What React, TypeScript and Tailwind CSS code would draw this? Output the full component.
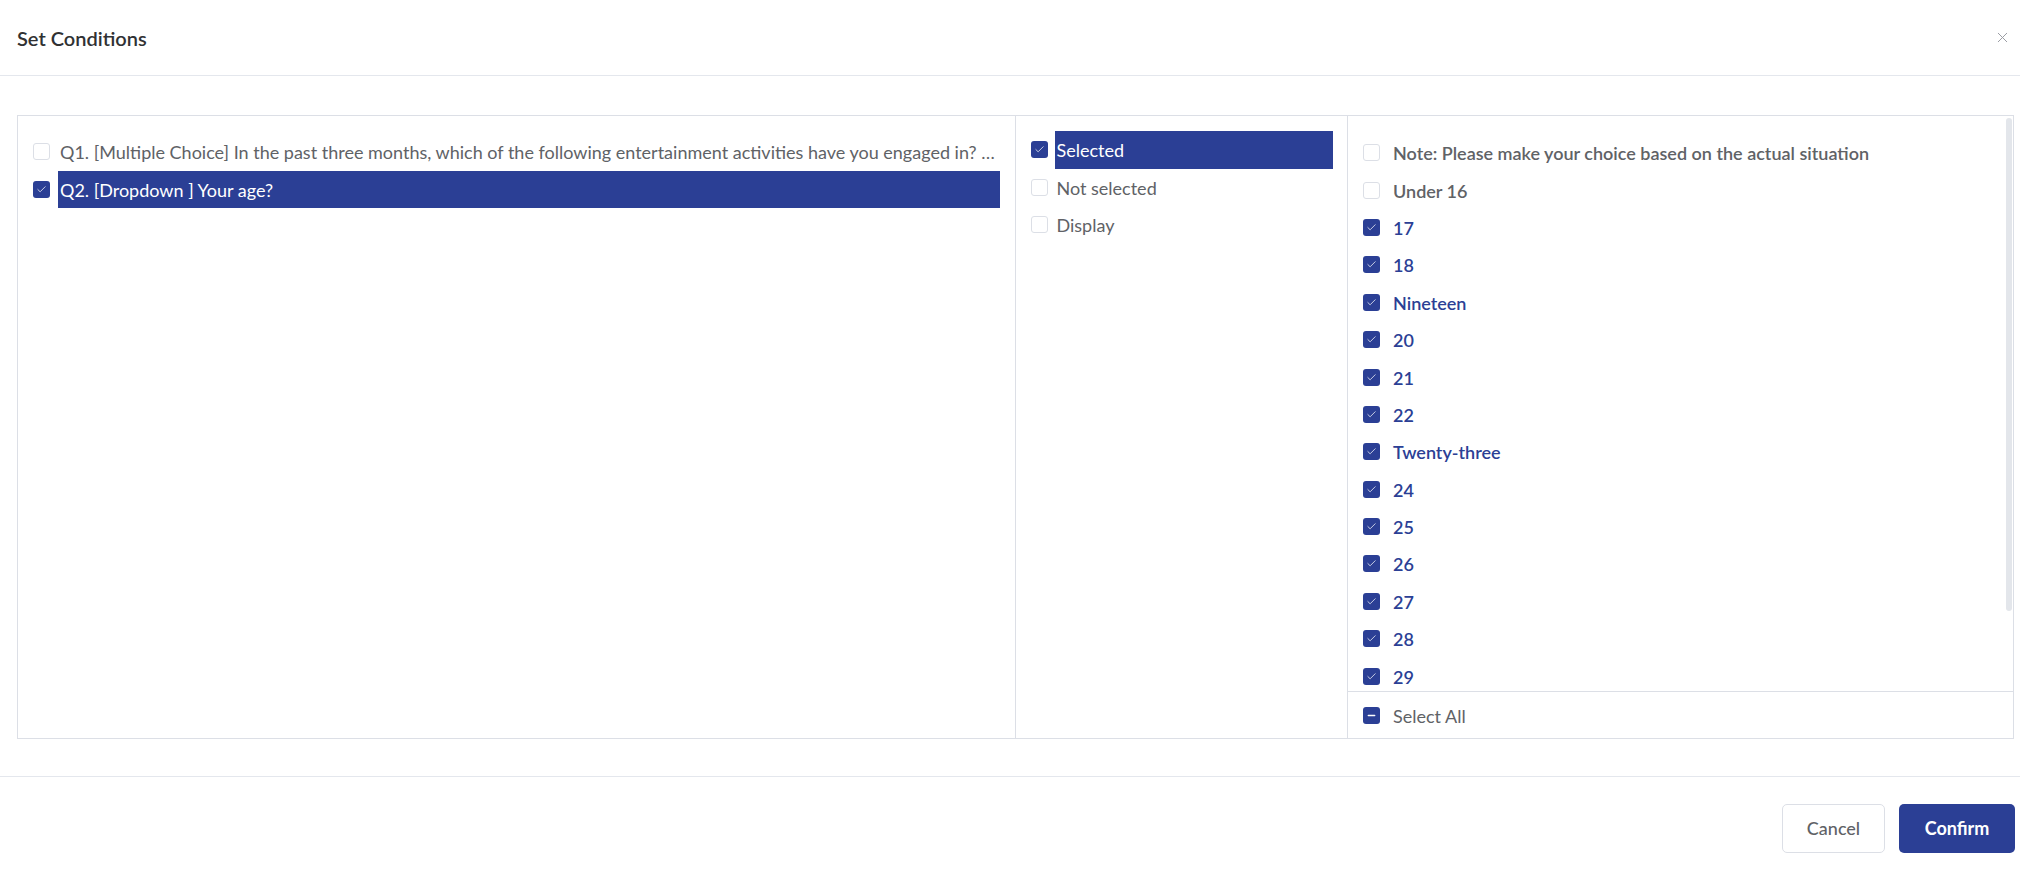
import { X, Check, Minus } from 'lucide-react';

const BLUE = 'bg-[#2b3f95]';

function Box({ checked, partial }: { checked?: boolean; partial?: boolean }) {
  if (checked || partial) {
    return (
      <span className={`flex h-[17px] w-[17px] shrink-0 items-center justify-center rounded-[3px] ${BLUE}`}>
        {partial ? <Minus size={11} strokeWidth={3} className="text-white" /> : <Check size={11} strokeWidth={1.6} className="text-white" />}
      </span>
    );
  }
  return <span className="h-[17px] w-[17px] shrink-0 rounded-[3px] border border-[#dcdfe6] bg-white" />;
}

const questions = [
  { label: 'Q1. [Multiple Choice] In the past three months, which of the following entertainment activities have you engaged in? (You can choose more than one)', on: false },
  { label: 'Q2. [Dropdown ] Your age?', on: true },
];

const modes = [
  { label: 'Selected', on: true },
  { label: 'Not selected', on: false },
  { label: 'Display', on: false },
];

const options = [
  { label: 'Note: Please make your choice based on the actual situation', on: false },
  { label: 'Under 16', on: false },
  { label: '17', on: true },
  { label: '18', on: true },
  { label: 'Nineteen', on: true },
  { label: '20', on: true },
  { label: '21', on: true },
  { label: '22', on: true },
  { label: 'Twenty-three', on: true },
  { label: '24', on: true },
  { label: '25', on: true },
  { label: '26', on: true },
  { label: '27', on: true },
  { label: '28', on: true },
  { label: '29', on: true },
  { label: '30', on: true },
];

export default function App() {
  return (
    <div className="flex h-[876px] w-[2020px] flex-col bg-white text-[18px] text-[#606266] [font-family:Lato,'Liberation_Sans',sans-serif]">
      {/* header */}
      <div className="flex h-[76px] shrink-0 items-center justify-between border-b border-[#e4e7ed] pl-[17px] pr-[9px]">
        <h2 className="text-[20px] font-semibold text-[#303133]">Set Conditions</h2>
        <X size={17} strokeWidth={1.4} className="text-[#9a9ca3]" />
      </div>

      {/* body */}
      <div className="pl-[17px] pr-[6px] pt-[39px]">
        <div className="grid h-[624px] grid-cols-[minmax(0,3fr)_minmax(0,1fr)_minmax(0,2fr)] border border-[#dcdfe6]">
          {/* questions */}
          <div className="flex min-w-0 flex-col border-r border-[#dcdfe6] pl-[15px] pr-[15px] pt-[17px]">
            {questions.map((q) => (
              <div key={q.label} className="flex h-[37.5px] items-center gap-[8px]">
                <Box checked={q.on} />
                <span className={`flex h-full min-w-0 flex-1 items-center pl-[2px] pt-[2px] ${q.on ? `${BLUE} text-white` : ''}`}>
                  <span className="truncate">{q.label}</span>
                </span>
              </div>
            ))}
          </div>

          {/* mode */}
          <div className="flex min-w-0 flex-col border-r border-[#dcdfe6] pl-[15px] pr-[14px] pt-[15px]">
            {modes.map((m) => (
              <div key={m.label} className="flex h-[37.5px] items-center gap-[7px]">
                <Box checked={m.on} />
                <span className={`flex h-full flex-1 items-center pl-[2px] pt-[2px] ${m.on ? `${BLUE} text-white` : ''}`}>{m.label}</span>
              </div>
            ))}
          </div>

          {/* options */}
          <div className="flex min-h-0 min-w-0 flex-col">
            <div className="relative min-h-0 flex-1 overflow-hidden pl-[15px] pt-[18px]">
              {options.map((o) => (
                <div key={o.label} className="flex h-[37.4px] items-center gap-[13px]">
                  <Box checked={o.on} />
                  <span className={`whitespace-nowrap pt-[2px] font-semibold ${o.on ? 'text-[#2b3f95]' : 'text-[#606266]'}`}>{o.label}</span>
                </div>
              ))}
              <div className="absolute right-[1px] top-[2px] h-[493px] w-[6px] rounded-full bg-[#e3e6eb]" />
            </div>
            <div className="flex h-[47px] shrink-0 items-center gap-[13px] border-t border-[#dcdfe6] pl-[15px]">
              <Box partial />
              <span className="pt-[2px]">Select All</span>
            </div>
          </div>
        </div>
      </div>

      {/* footer */}
      <div className="mt-[37px] flex flex-1 items-start justify-end gap-[14px] border-t border-[#e4e7ed] pr-[5px] pt-[27px]">
        <button className="h-[49px] w-[103px] rounded-[5px] border border-[#dcdfe6] bg-white font-medium text-[#606266]">Cancel</button>
        <button className={`h-[49px] w-[116px] rounded-[5px] ${BLUE} font-bold text-white`}>Confirm</button>
      </div>
    </div>
  );
}
